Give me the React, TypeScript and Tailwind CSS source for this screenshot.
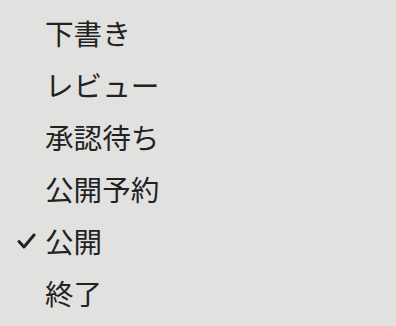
const items = ['下書き', 'レビュー', '承認待ち', '公開予約', '公開', '終了'];
const selected = '公開';

export default function App() {
  return (
    <div
      className="w-[396px] h-[326px] bg-[#e1e1df] pt-[7px] text-[#222222]"
      style={{ fontFamily: '"Noto Sans CJK JP", "Noto Sans", sans-serif' }}
    >
      <ul>
        {items.map((item) => (
          <li key={item} className="flex items-center h-[52px] text-[28.6px] leading-[52px]">
            <span className="w-[45px] flex justify-end pr-[9px]">
              {item === selected && (
                <svg width="19" height="16" viewBox="0 0 19 16" fill="none">
                  <path d="M2 8.5 L7 14 L17 2" stroke="#222222" strokeWidth="3" strokeLinecap="round" strokeLinejoin="round" />
                </svg>
              )}
            </span>
            <span>{item}</span>
          </li>
        ))}
      </ul>
    </div>
  );
}
